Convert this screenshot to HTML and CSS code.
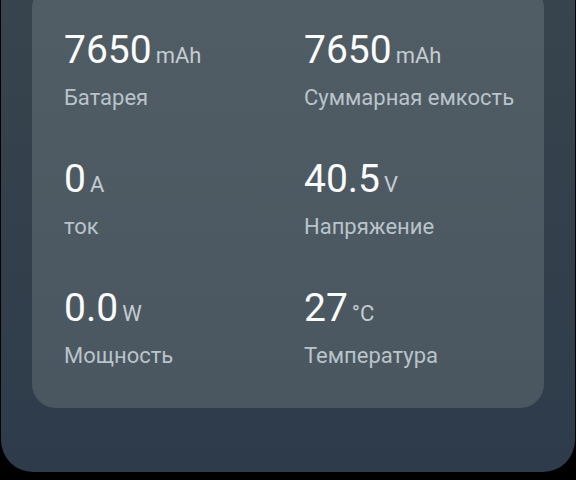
FILE: index.html
```html
<!DOCTYPE html>
<html lang="ru">
<head>
    <meta charset="UTF-8">
    <meta name="viewport" content="width=device-width, initial-scale=1.0">
    <title>Батарея</title>
    <link rel="stylesheet" href="styles.css">
</head>
<body>
    <div class="panel">
        <div class="card">
            <div class="stat">
                <div class="value">7650<span class="unit">mAh</span></div>
                <div class="label">Батарея</div>
            </div>
            <div class="stat">
                <div class="value">7650<span class="unit">mAh</span></div>
                <div class="label">Суммарная емкость</div>
            </div>
            <div class="stat">
                <div class="value">0<span class="unit">A</span></div>
                <div class="label">ток</div>
            </div>
            <div class="stat">
                <div class="value">40.5<span class="unit">V</span></div>
                <div class="label">Напряжение</div>
            </div>
            <div class="stat">
                <div class="value">0.0<span class="unit">W</span></div>
                <div class="label">Мощность</div>
            </div>
            <div class="stat">
                <div class="value">27<span class="unit">°C</span></div>
                <div class="label">Температура</div>
            </div>
        </div>
    </div>
</body>
</html>
```

FILE: styles.css
```css
html, body { margin: 0; padding: 0; background: #000; height: 480px; overflow: hidden; }
body { font-family: Roboto, "Noto Sans", sans-serif; }
.panel { margin: 0 1px; padding: 0 31px 64px; background: linear-gradient(180deg, #38444d 0%, #323f4b 60%, #2e3b4b 100%); border-radius: 0 0 32px 32px; }
.card { margin-top: -16px; padding: 43px 32px 38px; display: grid; grid-template-columns: 240px 1fr; row-gap: 44px; background: linear-gradient(180deg, #515d65 0%, #4b5760 100%); border-radius: 24px; }
.value { font-size: 39px; line-height: 46px; color: #fafbfb; white-space: nowrap; }
.unit { font-size: 22px; line-height: 0; margin-left: 4px; color: #c3cbd1; }
.label { margin-top: 11px; font-size: 22px; line-height: 28px; color: #b9c3ca; white-space: nowrap; }
```
